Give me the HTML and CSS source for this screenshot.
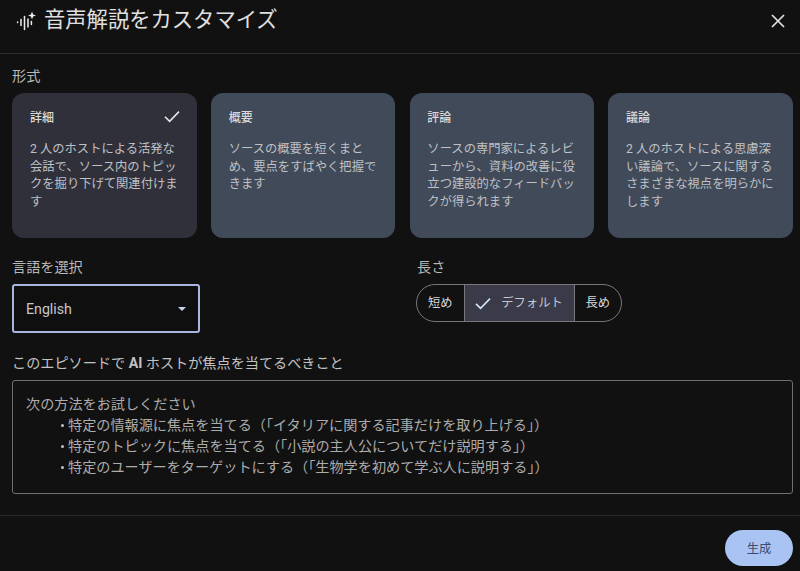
FILE: index.html
```html
<!DOCTYPE html>
<html lang="ja">
<head>
<meta charset="utf-8">
<title>音声解説をカスタマイズ</title>
<link rel="stylesheet" href="styles.css">
</head>
<body>
<div class="dialog">
  <header class="head">
    <div class="title-wrap">
      <svg class="spark" viewBox="0 0 20 20" width="20" height="20" aria-hidden="true">
        <g fill="none" stroke="#ececec" stroke-width="1.5" stroke-linecap="round">
          <path d="M1.6 11v.5"/><path d="M5 8.5v6"/><path d="M8.5 5.5v13"/><path d="M12 8v8"/><path d="M15.4 10.5v3"/>
        </g>
        <path d="M16 .5l1.1 2.9 2.9 1.1-2.9 1.1L16 8.5l-1.1-2.9L12 4.500l2.900-1.100z" fill="#ececec"/>
      </svg>
      <h1 class="title">音声解説をカスタマイズ</h1>
    </div>
    <svg class="close" viewBox="0 0 14 14" width="14" height="14" aria-hidden="true">
      <path d="M1 1l12 12M13 1L1 13" stroke="#e3e3e3" stroke-width="1.7" fill="none"/>
    </svg>
  </header>

  <main class="body">
    <div class="label format-label">形式</div>
    <div class="cards">
      <div class="card selected">
        <div class="card-head"><span class="card-title">詳細</span>
          <svg class="card-check" viewBox="0 0 16 13" width="16" height="13" aria-hidden="true"><path d="M1 6.800l4.600 4.600L15 1.600" stroke="#e6e6e6" stroke-width="1.600" fill="none"/></svg>
        </div>
        <p class="card-text">2 人のホストによる活発な会話で、ソース内のトピックを掘り下げて関連付けます</p>
      </div>
      <div class="card">
        <div class="card-head"><span class="card-title">概要</span></div>
        <p class="card-text">ソースの概要を短くまとめ、要点をすばやく把握できます</p>
      </div>
      <div class="card">
        <div class="card-head"><span class="card-title">評論</span></div>
        <p class="card-text">ソースの専門家によるレビューから、資料の改善に役立つ建設的なフィードバックが得られます</p>
      </div>
      <div class="card">
        <div class="card-head"><span class="card-title">議論</span></div>
        <p class="card-text">2 人のホストによる思慮深い議論で、ソースに関するさまざまな視点を明らかにします</p>
      </div>
    </div>

    <div class="options">
      <div class="lang-col">
        <div class="label">言語を選択</div>
        <div class="select"><span>English</span><span class="caret"></span></div>
      </div>
      <div class="len-col">
        <div class="label">長さ</div>
        <div class="toggle">
          <span class="seg seg-short">短め</span>
          <span class="seg seg-active">
            <svg viewBox="0 0 16 13" width="16" height="13" aria-hidden="true"><path d="M1 6.800l4.600 4.600L15 1.600" stroke="#cfe0f7" stroke-width="1.700" fill="none"/></svg>
            <span>デフォルト</span>
          </span>
          <span class="seg seg-long">長め</span>
        </div>
      </div>
    </div>

    <div class="label prompt-label">このエピソードで <b>AI</b> ホストが焦点を当てるべきこと</div>
    <div class="prompt">
      <div>次の方法をお試しください</div>
      <ul class="tips">
        <li>特定の情報源に焦点を当てる（「イタリアに関する記事だけを取り上げる」）</li>
        <li>特定のトピックに焦点を当てる（「小説の主人公についてだけ説明する」）</li>
        <li>特定のユーザーをターゲットにする（「生物学を初めて学ぶ人に説明する」）</li>
      </ul>
    </div>
  </main>

  <footer class="foot">
    <button class="generate">生成</button>
  </footer>
</div>
</body>
</html>
```

FILE: styles.css
```css
* { box-sizing: border-box; }
html, body { margin: 0; height: 100%; }
body {
  background: #111112;
  color: #c8c8c8;
  font-family: Roboto, "Noto Sans CJK JP", sans-serif;
  overflow: hidden;
}
.dialog { width: 800px; height: 571px; display: flex; flex-direction: column; }

.head {
  height: 54px;
  border-bottom: 1px solid #2e2e30;
  display: flex;
  align-items: flex-start;
  justify-content: space-between;
  padding: 13px 15px 0 16px;
}
.title-wrap { display: flex; align-items: center; gap: 8px; margin-top: -7px; }
.spark { display: block; margin-top: 2px; }
.title {
  margin: 0;
  font-size: 21.3px;
  line-height: 28px;
  font-weight: 400;
  color: #e0e0e0;
}
.close { display: block; margin-top: 1px; }

.body { padding: 0 7px 0 12px; height: 462px; border-bottom: 1px solid #2a2a2c; }
.label { font-size: 14.15px; line-height: 20px; color: #b8b8b8; }
.format-label { margin-top: 12px; margin-bottom: 7px; }

.cards { display: flex; gap: 14.2px; margin-left: 0.3px; }
.card {
  width: 184.5px;
  height: 145px;
  background: #414a59;
  border-radius: 12px;
  padding: 13px 16px 0 17.7px;
}
.card.selected { background: #30303b; }
.card-head { display: flex; justify-content: space-between; align-items: center; height: 20px; }
.card-title { font-size: 12px; font-weight: 500; color: #d8d8d8; }
.card-check { margin-right: 1px; margin-top: 1px; }
.card-text {
  margin: 15px 0 0;
  font-size: 12.3px;
  line-height: 17.7px;
  color: #bfc1c5;
}

.options { display: flex; margin-top: 19px; }
.lang-col { width: 404px; }
.select {
  margin-top: 7px;
  width: 188px;
  height: 49px;
  border: 2px solid #a9b6e0;
  border-radius: 3px;
  background: #0f0f10;
  padding: 0 12px;
  display: flex;
  align-items: center;
  justify-content: space-between;
  font-size: 14.2px;
  color: #c8c8c8;
}
.caret {
  width: 0;
  height: 0;
  margin: 1px 0 0;
  border-left: 4.5px solid transparent;
  border-right: 4.5px solid transparent;
  border-top: 4.5px solid #c9d3f0;
}
.len-col { margin-left: 1px; }
.toggle {
  margin-top: 7px;
  margin-left: -1px;
  display: flex;
  width: 206px;
  height: 38px;
  border: 1px solid #77787c;
  border-radius: 19px;
  overflow: hidden;
  font-size: 12.3px;
  color: #d8d8d8;
}
.seg { display: flex; align-items: center; justify-content: center; padding-bottom: 3px; }
.seg-short { width: 46.5px; }
.seg-long { flex: 1; }
.seg-active {
  width: 111px;
  gap: 10px;
  background: #3a3a48;
  border-left: 1px solid #77787c;
  border-right: 1px solid #77787c;
  color: #c2c8d2;
}
.seg-active svg { margin-top: 4px; }

.prompt-label { margin-top: 20px; color: #c2c2c2; }
.prompt-label b { font-weight: 700; }
.prompt {
  margin-top: 7px;
  width: 781px;
  height: 114px;
  border: 1px solid #6f6f71;
  border-radius: 3px;
  padding: 13px 13px 0;
  font-size: 14.15px;
  line-height: 21px;
  color: #acacac;
}
.tips { margin: 0; padding: 0 0 0 42px; list-style: none; }
.tips li { position: relative; }
.tips li::before {
  content: "";
  position: absolute;
  left: -7px;
  top: 9px;
  width: 3px;
  height: 3px;
  border-radius: 50%;
  background: #c4c4c4;
}

.foot { flex: 1; display: flex; justify-content: flex-end; align-items: flex-start; padding: 14px 7px 0 0; }
.generate {
  width: 68px;
  height: 36px;
  border: 0;
  border-radius: 18px;
  background: #a9c4f2;
  color: #3b4a6e;
  font-family: inherit;
  font-size: 12.3px;
  padding: 0;
}
```
